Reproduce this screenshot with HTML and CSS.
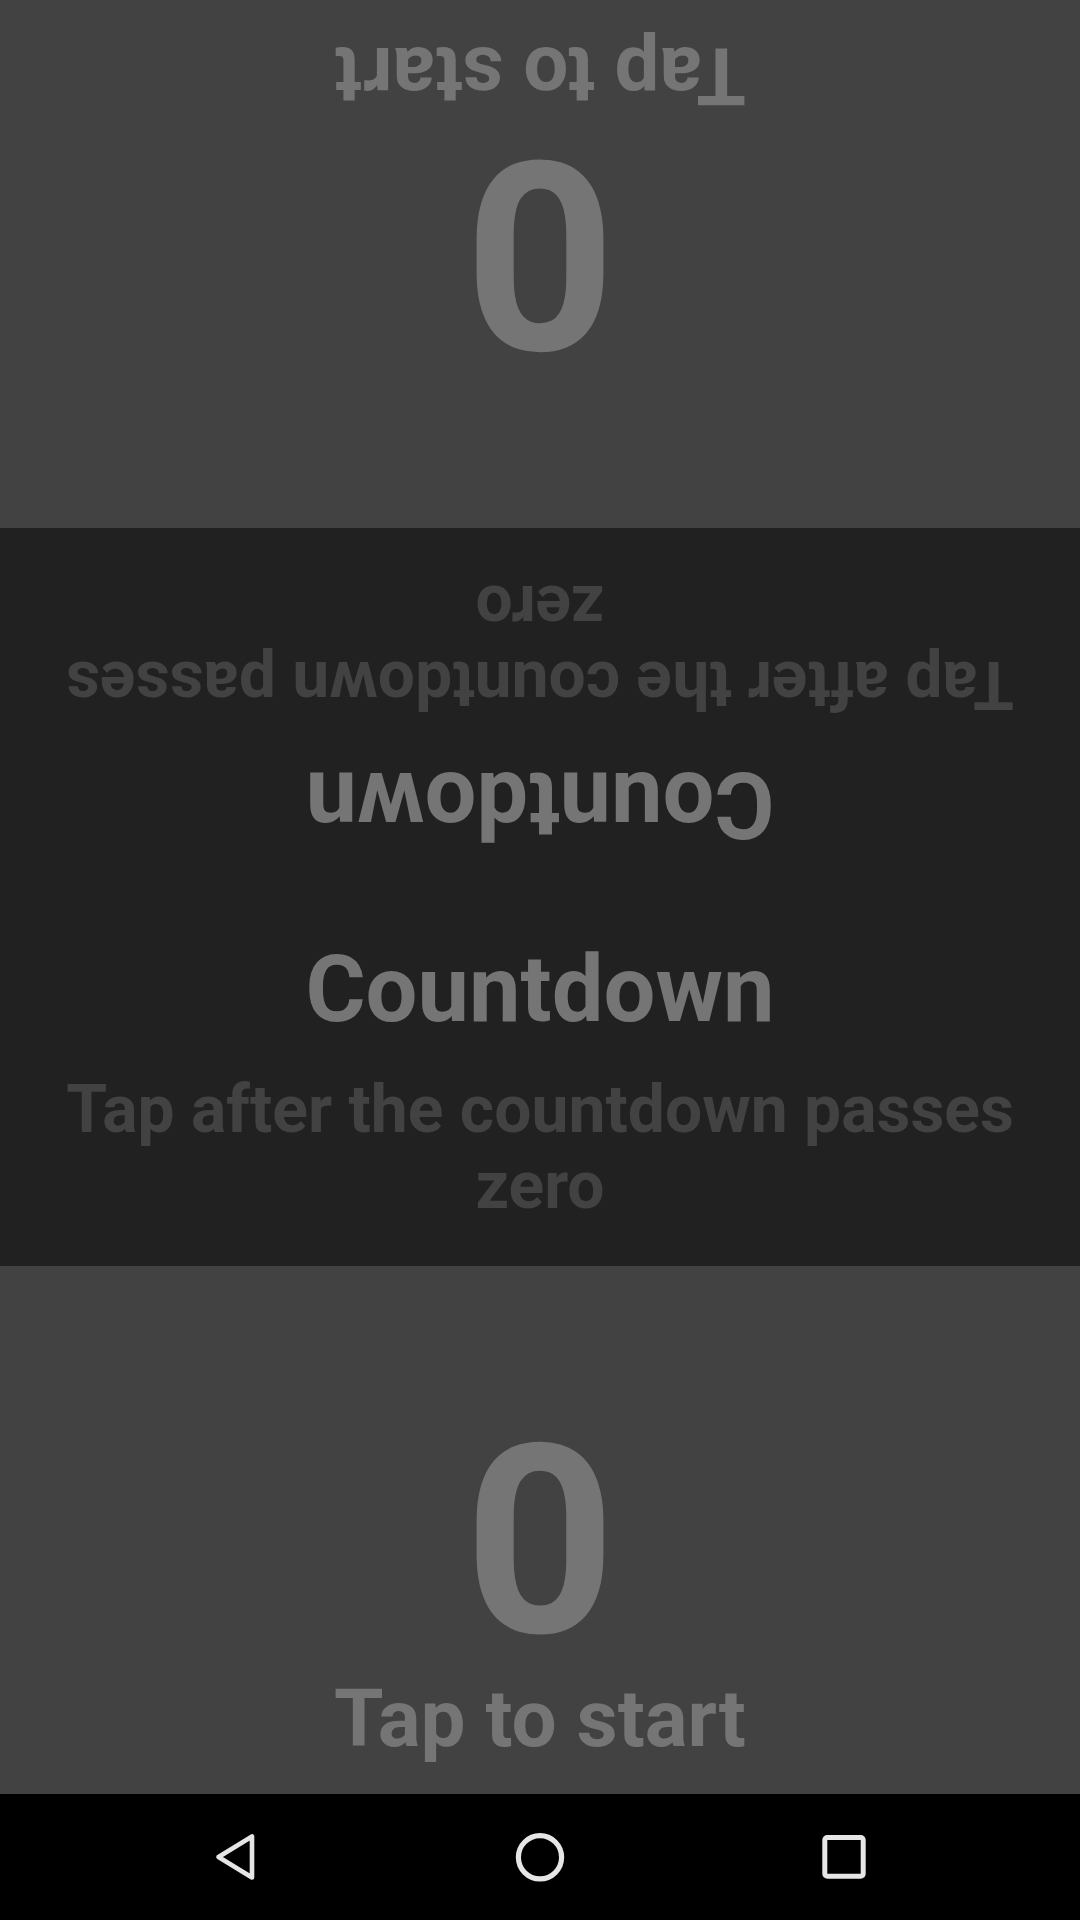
FILE: index.html
```html
<!DOCTYPE html>
<html>
<head>
<meta charset="utf-8">
<link rel="stylesheet" href="styles.css">
</head>
<body>
<div class="screen">
  <section class="player flipped">
    <div class="score">0</div>
    <div class="hint">Tap to start</div>
  </section>
  <section class="center">
    <div class="half flipped">
      <div class="title">Countdown</div>
      <div class="desc">Tap after the countdown passes zero</div>
    </div>
    <div class="half">
      <div class="title">Countdown</div>
      <div class="desc">Tap after the countdown passes zero</div>
    </div>
  </section>
  <section class="player">
    <div class="score">0</div>
    <div class="hint">Tap to start</div>
  </section>
  <nav class="navbar">
    <div class="navbtn">
      <svg width="60" height="60" viewBox="0 0 60 60"><polygon points="12.5,30 46,9.5 46,50.5" fill="none" stroke="#e6e6e6" stroke-width="4.6" stroke-linejoin="round"/></svg>
    </div>
    <div class="navbtn">
      <svg width="60" height="60" viewBox="0 0 60 60"><circle cx="30" cy="30.3" r="21.6" fill="none" stroke="#e6e6e6" stroke-width="5.2"/></svg>
    </div>
    <div class="navbtn">
      <svg width="60" height="60" viewBox="0 0 60 60"><rect x="10.8" y="10.6" width="38.4" height="38.6" rx="2.5" fill="none" stroke="#e6e6e6" stroke-width="5"/></svg>
    </div>
  </nav>
</div>
</body>
</html>
```

FILE: styles.css
```css
html, body {
  margin: 0;
  padding: 0;
  background: #000;
}
.screen {
  width: 1080px;
  height: 1920px;
  display: flex;
  flex-direction: column;
  font-family: Roboto, "Liberation Sans", sans-serif;
  font-weight: 700;
  text-align: center;
  overflow: hidden;
}
.flipped {
  transform: rotate(180deg);
}
.player {
  height: 528px;
  box-sizing: border-box;
  padding-top: 144px;
  background: #424242;
  color: #757575;
  display: flex;
  flex-direction: column;
  align-items: center;
}
.score {
  font-size: 264px;
  line-height: 264px;
}
.hint {
  font-size: 80px;
  line-height: 90px;
}
.center {
  height: 738px;
  background: #212121;
  display: flex;
  flex-direction: column;
}
.half {
  height: 369px;
  box-sizing: border-box;
  padding: 39px 40px 0;
  display: flex;
  flex-direction: column;
  align-items: center;
}
.title {
  font-size: 92px;
  line-height: 108px;
  color: #757575;
}
.desc {
  margin-top: 28px;
  font-size: 66px;
  line-height: 76px;
  color: #424242;
}
.navbar {
  height: 126px;
  background: #000;
  display: flex;
  justify-content: center;
  align-items: center;
  gap: 244px;
}
.navbtn {
  width: 60px;
  height: 60px;
  display: flex;
}
```
